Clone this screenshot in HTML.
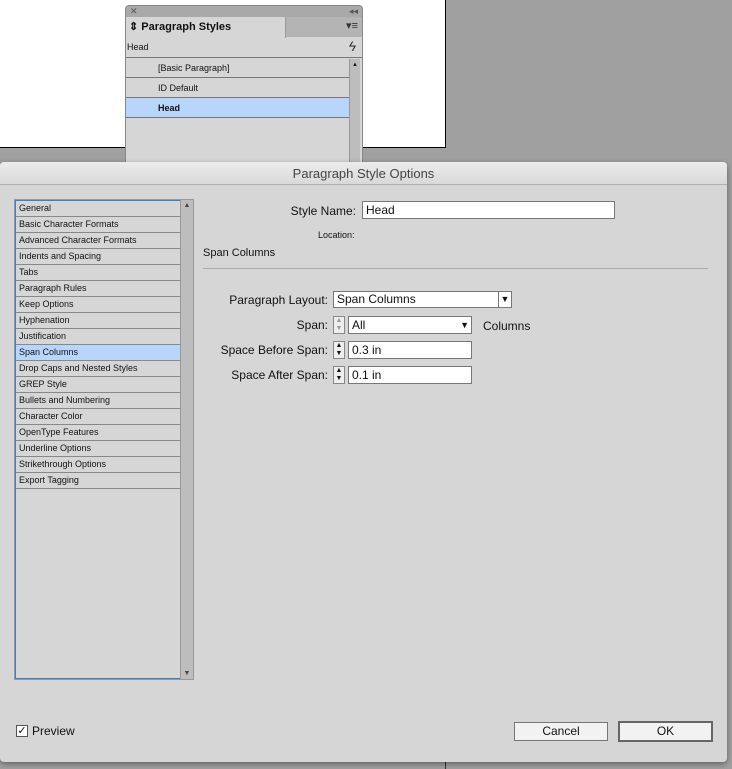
<!DOCTYPE html><html><head><style>
*{box-sizing:border-box;margin:0;padding:0}
body{width:732px;height:769px;position:relative;background:#a0a0a0;font-family:"Liberation Sans",sans-serif;font-size:10px;color:#111;overflow:hidden}
.a{position:absolute}
.li{position:absolute;left:0;width:165px;height:16px;border-bottom:1px solid #888;padding-left:3px;line-height:15px;font-size:9px}
.inp{position:absolute;background:#fff;border:1px solid #777;height:18px;font-size:12px;padding-left:3px;line-height:16px}
.lab{position:absolute;font-size:12px;text-align:right;width:200px}
.spin{position:absolute;width:12px;height:18px;border:1px solid #888;background:#eee;font-size:7px;line-height:8px;text-align:center}
.btn{position:absolute;background:#f2f2f2;border:1px solid #777;font-size:12px;text-align:center}
</style></head><body>
<div class="a" style="left:0;top:0;width:446px;height:148px;background:#fff;border-right:1px solid #000;border-bottom:1px solid #000"></div>
<div class="a" style="left:445px;top:760px;width:1px;height:9px;background:#333"></div>
<!-- panel -->
<div class="a" style="left:125px;top:5px;width:238px;height:160px;background:#d6d6d6;border:1px solid #888;border-radius:4px 4px 0 0;overflow:hidden">
 <div class="a" style="left:0;top:0;width:238px;height:11px;background:#a9a9a9;font-size:9px;color:#555;line-height:10px;padding-left:4px">✕<span style="position:absolute;right:6px">◂◂</span></div>
 <div class="a" style="left:0;top:11px;width:238px;height:20px;background:#b4b4b4"></div>
 <div class="a" style="left:0;top:11px;width:160px;height:21px;background:#d6d6d6;font-weight:bold;font-size:11px;line-height:20px;padding-left:3px;border-right:1px solid #999">⇕ Paragraph Styles</div>
 <div class="a" style="right:4px;top:13px;font-size:11px;color:#333">▾≡</div>
 <div class="a" style="left:1px;top:36px;font-size:9px">Head</div>
 <div class="a" style="right:6px;top:32px;font-size:14px;font-style:italic;color:#333">ϟ</div>
 <div class="a" style="left:0;top:51px;width:238px;height:1px;background:#777"></div>
 <div class="a" style="left:0;top:52px;width:223px;height:20px;border-bottom:1px solid #777;padding-left:32px;line-height:20px;font-size:9px">[Basic Paragraph]</div>
 <div class="a" style="left:0;top:72px;width:223px;height:20px;border-bottom:1px solid #777;padding-left:32px;line-height:20px;font-size:9px">ID Default</div>
 <div class="a" style="left:0;top:92px;width:223px;height:20px;border-bottom:1px solid #777;background:#b8d6fb;padding-left:32px;line-height:20px;font-size:9px;font-weight:bold">Head</div>
 <div class="a" style="left:223px;top:53px;width:11px;height:110px;background:#bdbdbd;border-left:1px solid #999;font-size:6px;text-align:center;line-height:12px">▲</div>
</div>
<!-- dialog -->
<div class="a" style="left:0;top:162px;width:727px;height:600px;background:#d6d6d6;border-radius:4px;box-shadow:0 2px 6px rgba(0,0,0,.4)">
 <div class="a" style="left:0;top:0;width:727px;height:23px;background:linear-gradient(#ececec,#d9d9d9);border-bottom:1px solid #b0b0b0;border-radius:4px 4px 0 0;text-align:center;font-size:13px;line-height:23px;color:#444">Paragraph Style Options</div>
 <div class="a" style="left:14px;top:37px;width:180px;height:481px;border:1px solid #999">
  <div class="a" style="left:0;top:0;width:166px;height:479px;border:1px solid #3a7fd0;border-right:none"></div>
  <div class="a" style="left:1px;top:1px;width:165px">
   <div class="li" style="top:0">General</div><div class="li" style="top:16px">Basic Character Formats</div><div class="li" style="top:32px">Advanced Character Formats</div><div class="li" style="top:48px">Indents and Spacing</div><div class="li" style="top:64px">Tabs</div><div class="li" style="top:80px">Paragraph Rules</div><div class="li" style="top:96px">Keep Options</div><div class="li" style="top:112px">Hyphenation</div><div class="li" style="top:128px">Justification</div><div class="li" style="top:144px;background:#b8d6fb">Span Columns</div><div class="li" style="top:160px">Drop Caps and Nested Styles</div><div class="li" style="top:176px">GREP Style</div><div class="li" style="top:192px">Bullets and Numbering</div><div class="li" style="top:208px">Character Color</div><div class="li" style="top:224px">OpenType Features</div><div class="li" style="top:240px">Underline Options</div><div class="li" style="top:256px">Strikethrough Options</div><div class="li" style="top:272px">Export Tagging</div>
  </div>
  <div class="a" style="left:165px;top:0;width:13px;height:479px;background:#bdbdbd;border-left:1px solid #999;font-size:7px;text-align:center;color:#444"><div style="position:absolute;top:2px;width:12px">▲</div><div style="position:absolute;bottom:2px;width:12px">▼</div></div>
 </div>
 <div class="lab" style="left:156px;top:42px">Style Name:</div>
 <div class="inp" style="left:362px;top:39px;width:253px">Head</div>
 <div class="a" style="left:318px;top:68px;font-size:9px">Location:</div>
 <div class="a" style="left:203px;top:85px;font-size:11px">Span Columns</div>
 <div class="a" style="left:203px;top:106px;width:505px;height:1px;background:#aaa"></div>
 <div class="lab" style="left:128px;top:131px">Paragraph Layout:</div>
 <div class="inp" style="left:333px;top:129px;width:179px;height:17px;line-height:15px">Span Columns<span style="position:absolute;right:0;top:0;width:13px;height:15px;border-left:1px solid #777;font-size:9px;text-align:center">▼</span></div>
 <div class="lab" style="left:128px;top:156px">Span:</div>
 <div class="spin" style="left:333px;top:154px;color:#999">▲<br>▼</div>
 <div class="inp" style="left:348px;top:154px;width:124px;height:18px">All<span style="position:absolute;right:2px;top:0;font-size:9px">▼</span></div>
 <div class="a" style="left:483px;top:157px;font-size:12px">Columns</div>
 <div class="lab" style="left:128px;top:181px">Space Before Span:</div>
 <div class="spin" style="left:333px;top:179px">▲<br>▼</div>
 <div class="inp" style="left:348px;top:179px;width:124px">0.3 in</div>
 <div class="lab" style="left:128px;top:206px">Space After Span:</div>
 <div class="spin" style="left:333px;top:204px">▲<br>▼</div>
 <div class="inp" style="left:348px;top:204px;width:124px">0.1 in</div>
 <div class="a" style="left:16px;top:563px;width:12px;height:12px;border:1px solid #555;background:#fff;font-size:11px;line-height:10px;text-align:center">✓</div>
 <div class="a" style="left:32px;top:562px;font-size:12px">Preview</div>
 <div class="btn" style="left:514px;top:560px;width:94px;height:19px;line-height:17px">Cancel</div>
 <div class="btn" style="left:618px;top:559px;width:95px;height:21px;line-height:17px;border:2px solid #666">OK</div>
</div>
</body></html>
